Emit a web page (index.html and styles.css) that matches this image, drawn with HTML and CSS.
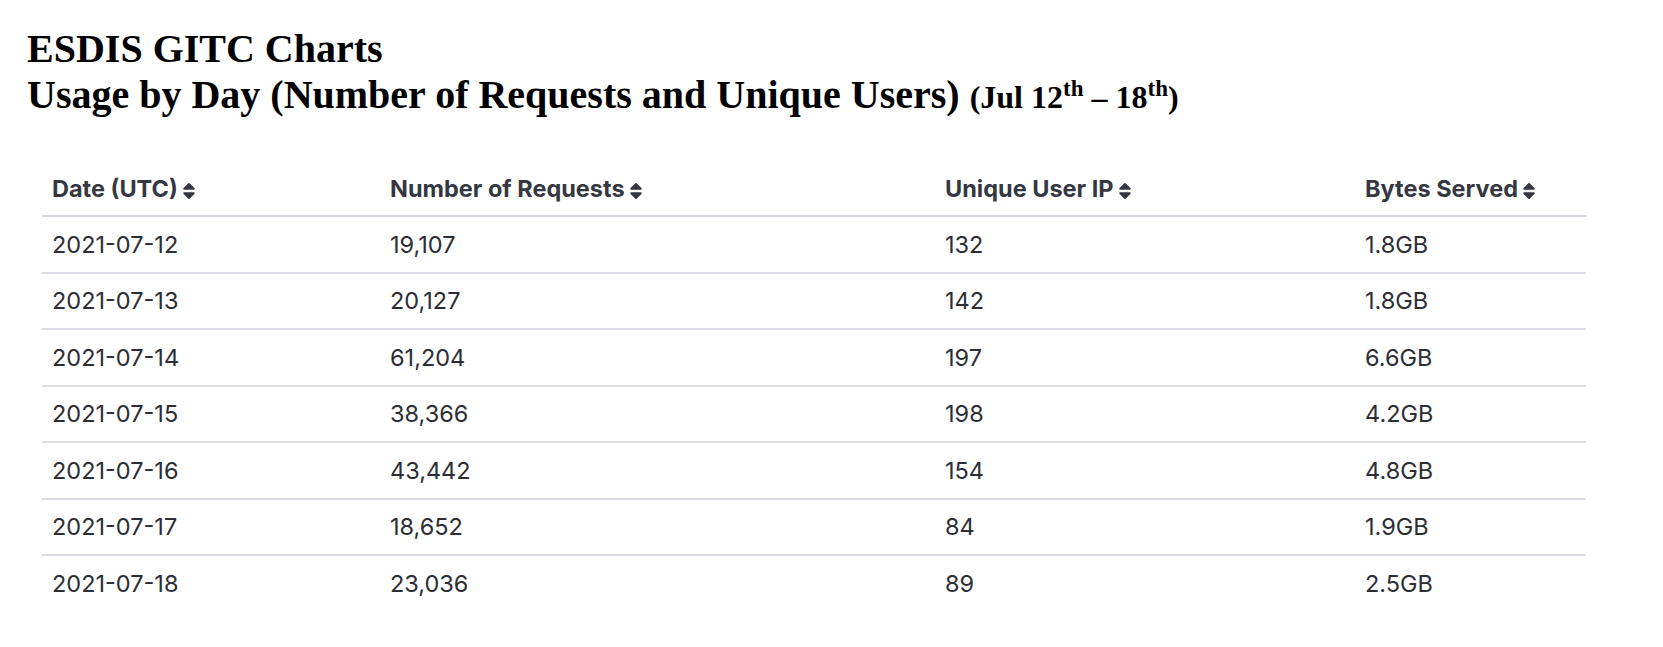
FILE: index.html
```html
<!DOCTYPE html>
<html>
<head>
<meta charset="utf-8">
<link rel="stylesheet" href="styles.css">
</head>
<body>
<div class="page">
  <h1 class="title">ESDIS GITC Charts<br>Usage by Day (Number of Requests and Unique Users) <span class="range">(Jul 12<sup>th</sup> – 18<sup>th</sup>)</span></h1>
  <table class="usage">
    <colgroup>
      <col class="c1"><col class="c2"><col class="c3"><col class="c4">
    </colgroup>
    <thead>
      <tr>
        <th>Date (UTC)<svg class="sort" viewBox="10 58 300 396"><path d="M41 288h238c21.4 0 32.1 25.9 17 41L177 448c-9.4 9.4-24.6 9.4-33.9 0L24 329c-15.1-15.1-4.4-41 17-41zm255-105L177 64c-9.4-9.4-24.6-9.4-33.9 0L24 183c-15.1 15.1-4.4 41 17 41h238c21.4 0 32.1-25.9 17-41z"/></svg></th>
        <th>Number of Requests<svg class="sort" viewBox="10 58 300 396"><path d="M41 288h238c21.4 0 32.1 25.9 17 41L177 448c-9.4 9.4-24.6 9.4-33.9 0L24 329c-15.1-15.1-4.4-41 17-41zm255-105L177 64c-9.4-9.4-24.6-9.4-33.9 0L24 183c-15.1 15.1-4.4 41 17 41h238c21.4 0 32.1-25.9 17-41z"/></svg></th>
        <th>Unique User IP<svg class="sort" viewBox="10 58 300 396"><path d="M41 288h238c21.4 0 32.1 25.9 17 41L177 448c-9.4 9.4-24.6 9.4-33.9 0L24 329c-15.1-15.1-4.4-41 17-41zm255-105L177 64c-9.4-9.4-24.6-9.4-33.9 0L24 183c-15.1 15.1-4.4 41 17 41h238c21.4 0 32.1-25.9 17-41z"/></svg></th>
        <th>Bytes Served<svg class="sort" viewBox="10 58 300 396"><path d="M41 288h238c21.4 0 32.1 25.9 17 41L177 448c-9.4 9.4-24.6 9.4-33.9 0L24 329c-15.1-15.1-4.4-41 17-41zm255-105L177 64c-9.4-9.4-24.6-9.4-33.9 0L24 183c-15.1 15.1-4.4 41 17 41h238c21.4 0 32.1-25.9 17-41z"/></svg></th>
      </tr>
    </thead>
    <tbody>
      <tr><td>2021-07-12</td><td>19,107</td><td>132</td><td>1.8GB</td></tr>
      <tr><td>2021-07-13</td><td>20,127</td><td>142</td><td>1.8GB</td></tr>
      <tr><td>2021-07-14</td><td>61,204</td><td>197</td><td>6.6GB</td></tr>
      <tr><td>2021-07-15</td><td>38,366</td><td>198</td><td>4.2GB</td></tr>
      <tr><td>2021-07-16</td><td>43,442</td><td>154</td><td>4.8GB</td></tr>
      <tr><td>2021-07-17</td><td>18,652</td><td>84</td><td>1.9GB</td></tr>
      <tr><td>2021-07-18</td><td>23,036</td><td>89</td><td>2.5GB</td></tr>
    </tbody>
  </table>
</div>
</body>
</html>
```
FILE: styles.css
```css
html, body {
  margin: 0;
  padding: 0;
  background: #ffffff;
}
.page {
  padding: 26px 0 0 27px;
}
.title {
  margin: 0 0 43px 0;
  font-family: "Liberation Serif", "Times New Roman", serif;
  font-weight: bold;
  font-size: 40px;
  line-height: 46px;
  color: #000000;
}
.range {
  font-size: 32px;
}
.range sup {
  font-size: 0.72em;
  line-height: 0;
}
.usage {
  margin-left: 15px;
  width: 1544px;
  border-collapse: collapse;
  font-family: Inter, "Noto Sans", sans-serif;
  font-size: 23.5px;
  color: #2c2e35;
}
.c1 { width: 338px; }
.c2 { width: 555px; }
.c3 { width: 420px; }
.c4 { width: 231px; }
.usage th {
  text-align: left;
  font-weight: 700;
  color: #353842;
  padding: 12px 10px 12px 10px;
  line-height: 28px;
  border-bottom: 2px solid #d5d9df;
  white-space: nowrap;
}
.usage td {
  padding: 13.5px 10px 13px 10px;
  line-height: 28px;
  border-bottom: 2px solid #dadde3;
}
.usage tbody tr:last-child td {
  border-bottom: none;
}
.sort {
  width: 12px;
  height: 16px;
  margin-left: 5px;
  vertical-align: -2px;
  fill: #353842;
}
```
